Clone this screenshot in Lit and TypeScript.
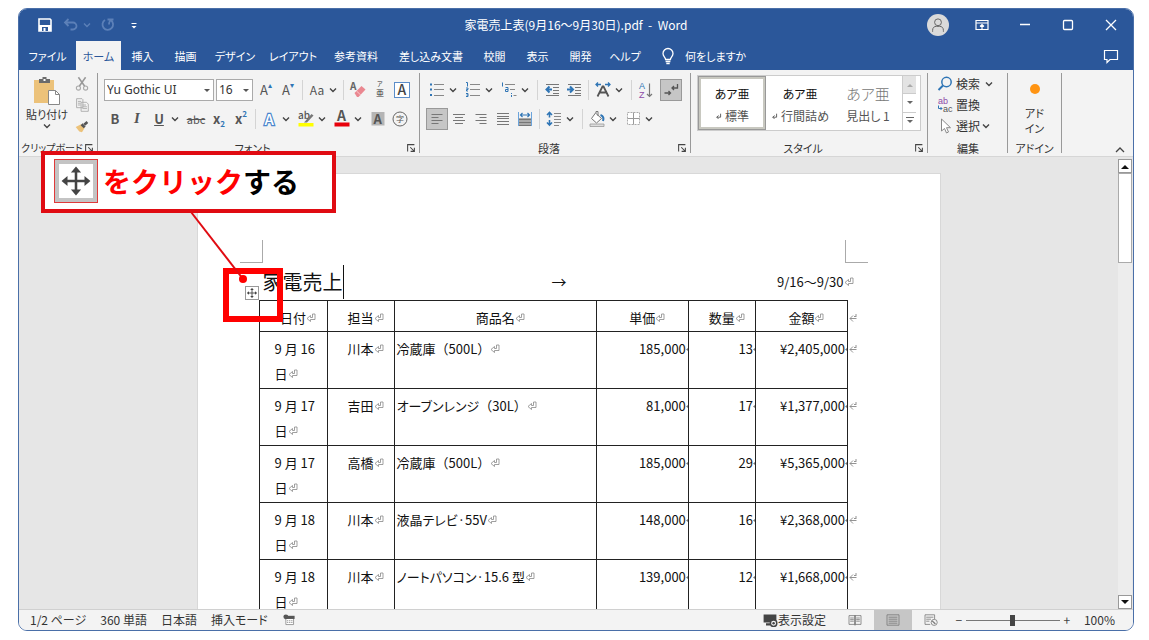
import { LitElement, html, css, svg, nothing } from "lit";
import { customElement } from "lit/decorators.js";
import { classMap } from "lit/directives/class-map.js";

const BLUE = "#2f75b5";

const glyphs: Record<string, unknown> = {
  save: svg`<path d="M4 4h11l1 1v11H4z" fill="none" stroke="#fff" stroke-width="1.6"/><path d="M4 10h12v6H4z" fill="#fff"/><path d="M7 12h6v4H7z" fill="#2b579a"/><path d="M8.500 13h2v3h-2z" fill="#fff"/>`,
  undo: svg`<path d="M7.500 4L4 7.500L7.500 11M4.500 7.500H12a3.500 3.500 0 0 1 0 7H9.500" fill="none" stroke="#5c80b8" stroke-width="1.800"/>`,
  redo: svg`<path d="M7 5a5.300 5.300 0 1 0 6 .3M9.500 4.500h6M14.500 4.500c-2 .5-3.500 2-3.500 5" fill="none" stroke="#5c80b8" stroke-width="1.800"/>`,
  customize: svg`<path d="M7.500 8.500h5" stroke="#fff" stroke-width="1.200"/><path d="M7.500 11h5L10 13.500z" fill="#fff"/>`,
  bulb: svg`<path d="M7.600 13.500c0-2-2.600-3-2.600-6a5 5 0 0 1 10 0c0 3-2.600 4-2.600 6zM7.600 15.500h4.800M8.300 17.500h3.400" fill="none" stroke="#fff" stroke-width="1.300"/>`,
  ribbonMode: svg`<path d="M4 5.500h12v9H4zM4 8h12M10 14V10M8 11.500l2-2 2 2" fill="none" stroke="#fff" stroke-width="1.200"/>`,
  minimize: svg`<path d="M5 9.500h10" stroke="#fff" stroke-width="1.300"/>`,
  maximize: svg`<rect x="5.500" y="5.500" width="9" height="9" rx="1" fill="none" stroke="#fff" stroke-width="1.300"/>`,
  close: svg`<path d="M5 5l10 10M15 5L5 15" stroke="#fff" stroke-width="1.300"/>`,
  comment: svg`<path d="M3.500 4.500h13v9H9l-3 3v-3H3.500z" fill="none" stroke="#fff" stroke-width="1.200"/>`,
  user: svg`<circle cx="10" cy="7" r="3.800" fill="none" stroke="#666" stroke-width="1.100"/><path d="M4 17.500v-1.500a4.500 4.500 0 0 1 4.500-4.500h3a4.500 4.500 0 0 1 4.500 4.500v1.500" fill="none" stroke="#666" stroke-width="1.100"/>`,
  cut: svg`<path d="M6 2.500l7 10M14 2.500L7 12.500" stroke="#999" stroke-width="1.700"/><circle cx="6" cy="14.500" r="2.300" fill="none" stroke="#aaa" stroke-width="1.200"/><circle cx="14" cy="14.500" r="2.300" fill="none" stroke="#aaa" stroke-width="1.200"/>`,
  copy: svg`<path d="M4 3h6l1 1v9H4zM9 7h6l2 2v8H9z" fill="#f3f3f3" stroke="#aaa"/><path d="M5.500 6h3.500M5.500 8h3M5.500 10h3M10.500 10h4M10.500 12h5M10.500 14h5" stroke="#aaa"/>`,
  brush: svg`<path d="M3 11l6-3 4 4-3 5-3-1z" fill="#ecc27a"/><path d="M9.500 8l3.500 3.500" stroke="#555" stroke-width="3"/><path d="M12.500 8.500L16 5.500" stroke="#555" stroke-width="3"/>`,
  paste: svg`<path d="M2 4h20v23H2z" fill="#ecc27a"/><path d="M7 3h3.500V1h4v2H18v4H7z" fill="#6b6b6b"/><path d="M11.500 3h2v2h-2z" fill="#fff"/><path d="M16.500 14.500h7l4 4v10h-11z" fill="#fff" stroke="#888"/><path d="M23.500 14.500v4h4" fill="none" stroke="#888"/>`,
  eraser: svg`<text x="2" y="10" font-size="10" font-weight="700" fill="#666">A</text><path d="M6.500 13l7-7 4 3.500-7 7.500h-1.500z" fill="#ea8790"/><path d="M8.500 11l4.500 4.300" stroke="#f8c9cd" stroke-width="1"/>`,
  ruby: svg`<text x="7" y="6" font-size="6" fill="#333">ア</text><text x="6" y="16" font-size="8" fill="#333">亜</text>`,
  boxedA: svg`<rect x="2.500" y="2.500" width="15" height="15" fill="#fff" stroke="#5b8dc9"/><text x="5.500" y="15" font-size="14" font-weight="500" fill="#444">A</text>`,
  circled: svg`<circle cx="10" cy="10" r="7" fill="none" stroke="#666"/><text x="6" y="13.300" font-size="8" fill="#555">字</text>`,
  effectA: svg`<text x="4.500" y="15.500" font-size="15" font-weight="500" fill="#fff" stroke="#4a86cc" stroke-width="2.400" paint-order="stroke">A</text>`,
  highlight: svg`<text x="2" y="10" font-size="10" font-weight="500" fill="#555">ab</text><path d="M8 13.500l7.500-8.500 2 1.500-6.500 7z" fill="#777"/><path d="M2.500 14h15v3.500h-15z" fill="#ff0"/>`,
  fontColor: svg`<text x="5" y="12" font-size="14" font-weight="700" fill="#555">A</text><path d="M2.500 13.500h15v4h-15z" fill="#e8000b"/>`,
  shadedA: svg`<path d="M3.500 3h13v13.500h-13z" fill="#b5b5b5"/><text x="5.500" y="14.500" font-size="13" font-weight="700" fill="#555">A</text>`,
  bullets: svg`<path d="M3 3.500h2v2H3zM3 8.500h2v2H3zM3 14h2v2H3z" fill="${BLUE}"/><path d="M7 4.500h10M7 9.500h10M7 15.500h10" stroke="#888"/>`,
  numbers: svg`<path d="M3 2.500h1.500v4M3 8h2v1.500H3.500V11H5M3 13.500h2v3H3M3.500 15H5" fill="none" stroke="${BLUE}" stroke-width="1"/><path d="M7 4.500h10M7 9.500h10M7 15.500h10" stroke="#888"/>`,
  levels: svg`<path d="M3.500 2.500v4M6.500 7.500H9v4H6.500v-2H9M12.500 13v1M12.500 15v2" fill="none" stroke="${BLUE}"/><path d="M6 4.500h10M11 9.500h5M14.500 15.500h3" stroke="#888"/>`,
  outdent: svg`<path d="M4 4.500h13M11 7.500h6M11 10.500h6M11 13.500h6M4 15.500h13" stroke="#777"/><path d="M10 9.500H5M7.500 6.500l-3 3 3 3" fill="none" stroke="${BLUE}" stroke-width="2"/>`,
  indent: svg`<path d="M4 4.500h13M11 7.500h6M11 10.500h6M11 13.500h6M4 15.500h13" stroke="#777"/><path d="M3 9.500h5M6 6.500l3 3-3 3" fill="none" stroke="${BLUE}" stroke-width="2"/>`,
  scaleText: svg`<path d="M3 4.500h5M5 2.500l-2 2 2 2M12 4.500h5M15 2.500l2 2-2 2" fill="none" stroke="${BLUE}" stroke-width="1.300"/><path d="M4.500 16.500L9.500 6.500h1l5 10M6.500 12.500h7" fill="none" stroke="#555" stroke-width="1.800"/>`,
  sort: svg`<text class="latin" x="3" y="9" font-size="9" fill="${BLUE}">A</text><text class="latin" x="3" y="17.500" font-size="9" fill="#8e4ba8">Z</text><path d="M13.500 3.500v13M11 14l2.500 2.500L16 14" fill="none" stroke="#777" stroke-width="1.200"/>`,
  marks: svg`<path d="M16.500 4v4H11M13 6l-2 2 2 2" fill="none" stroke="#555" stroke-width="1.300"/><path d="M3.500 13h6M7.500 11l2 2-2 2" fill="none" stroke="#555" stroke-width="1.300"/>`,
  left: svg`<path d="M4.500 5.500h11M4.500 8.500h7M4.500 11.500h11M4.500 14.500h7" stroke="#777"/>`,
  center: svg`<path d="M4 5.500h12M6 8.500h8M4 11.500h12M6 14.500h8" stroke="#777"/>`,
  right: svg`<path d="M4.500 5.500h11M8.500 8.500h7M4.500 11.500h11M8.500 14.500h7" stroke="#777"/>`,
  justify: svg`<path d="M4 4.500h12M4 7.500h12M4 9.500h12M4 12.500h12M4 15.500h12" stroke="#777"/>`,
  distribute: svg`<path d="M4 9h12v8H4z" fill="#aaa"/><path d="M4 10.500h12M4 13.500h12M4 16.500h12" stroke="#777"/><path d="M3.500 3v14M16.500 3v14" stroke="#6ba4dc"/><path d="M6 6h8M7.500 4L5.500 6l2 2M12.500 4l2 2-2 2" fill="none" stroke="${BLUE}" stroke-width="1.200"/>`,
  spacing: svg`<path d="M5.500 3.500v5M3 6l2.500-2.500L8 6M5.500 11v5M3 13.500L5.500 16 8 13.500" fill="none" stroke="${BLUE}" stroke-width="1.600"/><path d="M10 4.500h7M10 7.500h7M10 10.500h7M10 13.500h7M10 16.500h5" stroke="#888"/>`,
  bucket: svg`<path d="M8.500 4l6 5.500-5 4.500-5-4.500zM9 4V2.500h2V7" fill="#fff" stroke="#777"/><path d="M13.500 6c3 1 3.500 3 2.500 6" fill="none" stroke="${BLUE}" stroke-width="2"/><path d="M3 15h14v2.500H3z" fill="#ddd" stroke="#999" stroke-width=".8"/>`,
  borders: svg`<path d="M4.500 3.500h12v12h-12z" fill="#fff" stroke="#aaa" stroke-dasharray="2 1"/><path d="M10.500 3.500v12M4.500 9.500h12" stroke="#999"/>`,
  search: svg`<circle cx="11.500" cy="8" r="4.700" fill="none" stroke="${BLUE}" stroke-width="1.500"/><path d="M8 11.500L3.500 16" stroke="${BLUE}" stroke-width="2"/>`,
  replace: svg`<text class="latin" x="3" y="8.500" font-size="9" fill="#8e4ba8">ab</text><text class="latin" x="8" y="17" font-size="9" fill="#555">ac</text><path d="M3.500 10.500v3H7M5.500 12l1.500 1.500L5.500 15" fill="none" stroke="${BLUE}"/>`,
  pointer: svg`<path d="M6.500 3v12l3-2.500 2 4.500 2-1-2-4.300h4z" fill="#fff" stroke="#888"/>`,
  launcher: svg`<path d="M3.500 12.500v-9h9M7 7l5.500 5.500M12.500 7.500v5h-5" fill="none" stroke="#444" stroke-width="1.400"/>`,
  macro: svg`<path d="M5.500 5.500h11v11h-11z" fill="#fff" stroke="#777"/><path d="M5 4h13v4.500H5z" fill="#555"/><circle cx="5.500" cy="5.500" r="3.500" fill="#555"/><path d="M7 11h8M7 13.500h8" stroke="#777" stroke-dasharray="2 1"/>`,
  display: svg`<path d="M2 3h16v10H2zM5 14h5v3H5z" fill="#444"/><circle cx="14.500" cy="14" r="4" fill="#f3f3f3" stroke="#444" stroke-width="1.800"/><circle cx="14.500" cy="14" r="1.500" fill="#444"/>`,
  reader: svg`<path d="M2.500 4.500H10v11H2.500zM10 4.500h7.500v11H10zM10 4v13M4 7.500h4.500M4 9.500h4.500M4 11.500h4.500M11.500 7.500H16M11.500 9.500H16M11.500 11.500H16" fill="none" stroke="#777"/>`,
  print: svg`<path d="M2.500 3.500h15v13h-15zM4.500 6.500h11M4.500 9h11M4.500 11.500h11M4.500 14h11" fill="none" stroke="#777"/>`,
  web: svg`<path d="M9 15.500H2.500v-12h12V9M4 6.500h9M4 9h6M4 11.500h4" fill="none" stroke="#777"/><circle cx="14" cy="13" r="3.800" fill="#f3f3f3" stroke="#777"/><path d="M11.500 11l4 4" stroke="#777" stroke-width="1.500"/>`,
  move: svg`<path d="M10 3v14M3 10h14" stroke="#444" stroke-width="1.500"/><path d="M10 1.500l3 3.500H7zM10 18.500l3-3.500H7zM1.500 10L5 7v6zM18.500 10L15 7v6z" fill="#444"/>`,
};

const icon = (name: string, size = 20, box = 20) =>
  html`<svg width=${size} height=${size} viewBox="0 0 ${box} ${box}" aria-hidden="true">${glyphs[name]}</svg>`;
const chevron = (color = "#444") =>
  html`<svg width="10" height="8" viewBox="0 0 10 8" aria-hidden="true"><path d="M2 2.500L5 5.500l3-3" fill="none" stroke=${color} stroke-width="1.400" /></svg>`;
const mark = () =>
  html`<span class="mark"><svg width="10" height="10" viewBox="0 0 10 10" aria-hidden="true"><path d="M6.500 1h2.500V6.500H4.500V8.500L1 5.500 4.500 2.500v2h2z" fill="#fff" stroke="#888" stroke-width=".8" /></svg></span>`;
const endMark = () =>
  html`<span class="mark"><svg width="10" height="10" viewBox="0 0 10 10" aria-hidden="true"><path d="M8 1v2M8.500 5.500H2M5 2.500l-3 3 3 3M6 3.500h2.500" fill="none" stroke="#888" stroke-width=".9" /></svg></span>`;
const cellDot = () =>
  html`<span class="mark"><svg width="3" height="10" viewBox="0 0 3 10" aria-hidden="true"><path d="M0 5.500l2-1.500v3z" fill="#777" /></svg></span>`;

const common = css`
  :host { display: block; font-family: "Noto Sans CJK JP", "Noto Sans", sans-serif; font-size: 12px; color: #333; }
  * { box-sizing: border-box; }
  button, select, input { font: inherit; color: inherit; margin: 0; padding: 0; border: 0; background: none; }
  button { display: inline-flex; align-items: center; justify-content: center; white-space: nowrap; }
  svg { display: block; flex: none; overflow: visible; }
  svg text { font-family: "Noto Sans CJK JP", sans-serif; }
  svg .latin { font-family: "Liberation Sans", sans-serif; }
`;

@customElement("word-ribbon")
export class WordRibbon extends LitElement {
  static styles = [common, css`
    :host { background: #f3f3f3; border-bottom: 1px solid #d6d6d6; font-feature-settings: "palt"; }
    .ribbon { display: flex; padding-top: 3px; }
    .group { display: flex; flex-direction: column; flex: none; height: 83px; padding: 0 6px; }
    .font { width: 321px; }
    .paragraph { width: 270px; }
    .styles { width: 236px; }
    .rule { width: 1px; height: 80px; background: #999; flex: none; }
    .body { height: 67px; padding-top: 2px; }
    .caption { display: flex; align-items: center; height: 16px; font-size: 11px; line-height: 16px; margin: 0 -4px; }
    .caption span { flex: 1; text-align: center; white-space: nowrap; }
    .caption button { width: 12px; height: 14px; }
    .row { display: flex; align-items: center; height: 29px; }
    .tool { width: 22px; height: 22px; flex: none; }
    .split { width: 36px; height: 22px; flex: none; justify-content: flex-start; }
    .split > span { width: 22px; text-align: center; }
    .split > svg:first-child { margin: 0 1px; }
    .wide { width: 34px; }
    .on { background: #c6c6c6; border: 1px solid #999; }
    .apart { margin-left: 3px; }
    .sep { width: 1px; height: 20px; margin: 0 3px; background: #d4d4d4; flex: none; }
    .combo { position: relative; display: flex; border: 1px solid #aaa; background: #fff; height: 22px; font-family: "Noto Sans", sans-serif; }
    .combo select { appearance: none; width: 100%; padding-left: 2px; }
    .combo::after { content: ""; position: absolute; right: 3px; top: 9px; border: 3px solid transparent; border-top-color: #555; pointer-events: none; }
    .face { width: 110px; }
    .size { width: 37px; margin: 0 2px; }
    .letter { font-size: 13px; font-weight: 700; color: #555; }
    .case { color: #555; }
    .italic { font-family: "Liberation Serif", serif; font-style: italic; font-size: 15px; }
    .under { text-decoration: underline; }
    .strike { font-size: 11px; font-weight: 400; text-decoration: line-through; width: 24px; }
    .script { font-size: 8px; line-height: 12px; color: #2f75b5; }
    .sub { align-self: flex-end; } .sup { align-self: flex-start; }
    .grow { font-size: 13px; color: #555; }
    .clip { padding: 0 4px; width: 78px; }
    .clip .body { display: flex; padding-top: 0; }
    .clip .caption { margin: 0 -2px; font-size: 10px; }
    .paste { flex-direction: column; width: 48px; justify-content: flex-start; font-size: 11px; line-height: 16px; padding-top: 3px; }
    .minor { display: flex; flex-direction: column; padding-top: 0; }
    .minor button { width: 22px; height: 21px; }
    .gallery { display: flex; height: 56px; border: 1px solid #ccc; background: #fff; }
    .style { flex-direction: column; width: 68px; line-height: 18px; color: #555; }
    .style b { font-weight: 400; font-size: 13px; line-height: 26px; color: #111; }
    .style.chosen b, .style b { font-size: 12px; }
    .style.heading b { color: #777; font-weight: 300; font-size: 15px; }
    .chosen { border: 3px solid #c8c8c0; outline: 1px solid #999; outline-offset: -1px; }
    .style span { display: flex; align-items: center; gap: 3px; font-size: 12px; }
    .scroller { display: flex; flex-direction: column; border-left: 1px solid #ccc; width: 14px; }
    .scroller button { flex: 1; border-bottom: 1px solid #ccc; }
    .scroller button:first-child { background: #e3e3e3; }
    .scroller button:last-child { border-bottom: 0; }
    .edit { width: 79px; padding-left: 7px; }
    .edit .body { padding-top: 0; display: flex; flex-direction: column; align-items: flex-start; }
    .edit .body button { height: 21px; gap: 1px; }
    .addin { width: 53px; }
    .addin .body button { flex-direction: column; font-size: 11px; line-height: 15px; width: 100%; gap: 12px; padding-top: 9px; }
    .dot { width: 10px; height: 10px; border-radius: 5px; background: #ff9412; }
    .collapse { margin-left: auto; align-self: flex-end; padding: 2px 8px; }
    .style.plain b { font-size: 14px; }
  `];

  private tool(name: string, label: string, extra = "") {
    return html`<button class="tool ${extra}" aria-label=${label}>${icon(name)}</button>`;
  }
  private split(name: string, label: string) {
    return html`<button class="split" aria-label=${label}>${icon(name)}${chevron()}</button>`;
  }
  private caption(text: string, launcher = true) {
    return html`<div class="caption"><span>${text}</span>${launcher ? html`<button aria-label=${text + "の詳細"}>${icon("launcher", 12, 16)}</button>` : nothing}</div>`;
  }

  render() {
    const sep = html`<span class="sep"></span>`;
    const rule = html`<span class="rule"></span>`;
    const ret = html`<svg width="7" height="7" viewBox="0 0 10 10"><path d="M8 1v5H2.500M5 3.500L2.500 6 5 8.500" fill="none" stroke="#555" stroke-width="1.300" /></svg>`;
    return html`<div class="ribbon">
      <div class="group clip">
        <div class="body">
          <button class="paste">${icon("paste", 30, 30)}<span>貼り付け</span>${chevron()}</button>
          <div class="minor">
            <button aria-label="切り取り">${icon("cut", 18)}</button>
            <button aria-label="コピー">${icon("copy", 18)}</button>
            <button aria-label="書式のコピー">${icon("brush", 18)}</button>
          </div>
        </div>
        ${this.caption("クリップボード")}
      </div>
      ${rule}
      <div class="group font">
        <div class="body">
          <div class="row">
            <label class="combo face"><select aria-label="フォント"><option>Yu Gothic UI</option></select></label>
            <label class="combo size"><select aria-label="フォント サイズ"><option>16</option></select></label>
            <button class="tool grow" aria-label="拡大">A<span class="script sup">▴</span></button>
            <button class="tool grow" aria-label="縮小">A<span class="script sup">▾</span></button>
            ${sep}<button class="split wide case" aria-label="文字種の変換"><span>Aa</span>${chevron()}</button>${sep}
            ${this.tool("eraser", "書式のクリア")}${this.tool("ruby", "ルビ")}${this.tool("boxedA", "囲み線")}
          </div>
          <div class="row">
            <button class="tool letter">B</button>
            <button class="tool letter italic">I</button>
            <button class="split letter"><span class="under">U</span>${chevron()}</button>
            <button class="tool letter strike">abc</button>
            <button class="tool letter">x<span class="script sub">2</span></button>
            <button class="tool letter">x<span class="script sup">2</span></button>
            ${sep}${this.split("effectA", "文字の効果")}${this.split("highlight", "蛍光ペン")}${this.split("fontColor", "フォントの色")}
            ${this.tool("shadedA", "網かけ")}${this.tool("circled", "囲い文字")}
          </div>
        </div>
        ${this.caption("フォント")}
      </div>
      ${rule}
      <div class="group paragraph">
        <div class="body">
          <div class="row">
            ${this.split("bullets", "箇条書き")}${this.split("numbers", "段落番号")}${this.split("levels", "アウトライン")}${sep}
            ${this.tool("outdent", "インデントを減らす")}${this.tool("indent", "インデントを増やす")}${sep}
            ${this.split("scaleText", "拡張書式")}${sep}${this.tool("sort", "並べ替え")}${this.tool("marks", "編集記号", "on apart")}
          </div>
          <div class="row">
            ${this.tool("left", "左揃え", "on")}${this.tool("center", "中央揃え")}${this.tool("right", "右揃え")}${this.tool("justify", "両端揃え")}${this.tool("distribute", "均等割り付け")}
            ${sep}${this.split("spacing", "行間")}${sep}${this.split("bucket", "塗りつぶし")}${this.split("borders", "罫線")}
          </div>
        </div>
        ${this.caption("段落")}
      </div>
      ${rule}
      <div class="group styles">
        <div class="body">
          <div class="gallery">
            <button class="style chosen"><b>あア亜</b><span>${ret}標準</span></button>
            <button class="style"><b>あア亜</b><span>${ret}行間詰め</span></button>
            <button class="style heading"><b>あア亜</b><span>見出し 1</span></button>
            <div class="scroller">
              <button aria-label="上へ"><svg width="6" height="4"><path d="M0 4l3-3 3 3z" fill="#aaa" /></svg></button>
              <button aria-label="下へ"><svg width="6" height="4"><path d="M0 0l3 3 3-3z" fill="#666" /></svg></button>
              <button aria-label="その他"><svg width="8" height="8"><path d="M0 .5h8" stroke="#666" /><path d="M1 3l3 3 3-3z" fill="#666" /></svg></button>
            </div>
          </div>
        </div>
        ${this.caption("スタイル")}
      </div>
      ${rule}
      <div class="group edit">
        <div class="body">
          <button>${icon("search")}検索&nbsp; ${chevron()}</button>
          <button>${icon("replace")}置換</button>
          <button>${icon("pointer")}選択${chevron()}</button>
        </div>
        ${this.caption("編集", false)}
      </div>
      ${rule}
      <div class="group addin">
        <div class="body"><button><span class="dot"></span><span>アド<br />イン</span></button></div>
        ${this.caption("アドイン", false)}
      </div>
      ${rule}
      <button class="collapse" aria-label="リボンを折りたたむ"><svg width="10" height="8" viewBox="0 0 10 8"><path d="M1 6l4-4 4 4" fill="none" stroke="#444" stroke-width="1.300" /></svg></button>
    </div>`;
  }
}

interface Sale { day: string; staff: string; item: string; price: string; count: string; total: string; }

const sales: Sale[] = [
  { day: "16", staff: "川本", item: "冷蔵庫（500L）", price: "185,000", count: "13", total: "¥2,405,000" },
  { day: "17", staff: "吉田", item: "オーブンレンジ（30L）", price: "81,000", count: "17", total: "¥1,377,000" },
  { day: "17", staff: "高橋", item: "冷蔵庫（500L）", price: "185,000", count: "29", total: "¥5,365,000" },
  { day: "18", staff: "川本", item: "液晶テレビ·55V", price: "148,000", count: "16", total: "¥2,368,000" },
  { day: "18", staff: "川本", item: "ノートパソコン·15.6 型", price: "139,000", count: "12", total: "¥1,668,000" },
];

// Katakana runs are set proportionally, everything else keeps full-width metrics.
const kana = (text: string) =>
  text.split(/([ァ-ー]+)/).map((part) => (/^[ァ-ー]/.test(part) ? html`<span class="kana">${part}</span>` : part));

@customElement("word-document")
export class WordDocument extends LitElement {
  static styles = [common, css`
    :host { flex: 1; min-height: 0; display: flex; background: #e6e6e6; overflow: hidden; }
    .canvas { flex: 1; display: flex; justify-content: center; align-items: flex-start; padding-top: 16px; overflow: hidden; }
    .page { width: 744px; background: #fff; border: 1px solid #d8d8d8; color: #111; padding: 66px 72px 60px 61px; font-size: 13px; }
    .corners { display: flex; justify-content: space-between; margin: 0 0 0 -19px; }
    .corner { width: 23px; height: 23px; border: 0 solid #aaa; border-width: 0 1px 1px 0; }
    .corner:last-child { border-width: 0 0 1px 1px; }
    .lead { display: grid; grid-template-columns: 1fr auto 1fr; align-items: center; height: 37px; padding: 0 24px 0 4px; }
    .lead > span:last-child { justify-self: end; }
    h1 { margin: 0; font-size: 20px; font-weight: 400; line-height: 34px; border-right: 1px solid #111; justify-self: start; }
    .tab { font-size: 15px; padding-left: 12px; }
    .sheet { position: relative; }
    .handle { position: absolute; left: -14px; top: -14px; width: 14px; height: 14px; border: 1px solid #999; background: #fff; }
    table { border-collapse: collapse; table-layout: fixed; width: 601px; line-height: 25px; }
    .date { width: 68px; } .name { width: 67px; } .item { width: 202px; } .price { width: 92px; } .end { width: 12px; }
    th, td { border: 1px solid #222; padding: 0 2px; font-weight: 400; vertical-align: top; text-align: left; white-space: nowrap; }
    thead th, thead td { height: 31px; padding-top: 4px; text-align: center; }
    tbody td { height: 57px; padding-top: 4px; }
    tbody .day { padding-left: 15px; }
    .mid, tbody .mid { text-align: center; }
    .num { text-align: right; }
    .kana { font-feature-settings: "palt"; }
    thead .out, tbody .out { border: 0; border-left: 1px solid #222; padding-left: 0; text-align: left; }
    .mark { display: inline-block; width: 0; height: 10px; }
    .bar { width: 14px; margin: 2px 1px 0 0; display: flex; flex-direction: column; background: #ededed; }
    .bar button { height: 14px; background: #fff; border: 1px solid #999; flex: none; }
    .thumb { height: 90px; background: #fff; border: 1px solid #aaa; margin-bottom: auto; }
  `];

  render() {
    return html`
      <div class="canvas"><article class="page">
        <div class="corners"><span class="corner"></span><span class="corner"></span></div>
        <div class="lead"><h1>家電売上</h1><span class="tab">→</span><span>9/16～9/30${mark()}</span></div>
        <div class="sheet">
          <button class="handle" aria-label="表全体の選択">${icon("move", 12)}</button>
          <table>
            <colgroup><col class="date" /><col class="name" /><col class="item" /><col class="price" /><col class="name" /><col class="price" /><col class="end" /></colgroup>
            <thead><tr>${["日付", "担当", "商品名", "単価", "数量", "金額"].map((h) => html`<th>${h}${mark()}</th>`)}<td class="out">${endMark()}</td></tr></thead>
            <tbody>${sales.map((s) => html`<tr>
              <td class="day">9 月 ${s.day}<br />日${mark()}</td>
              <td class="mid">${s.staff}${mark()}</td>
              <td>${kana(s.item)}${mark()}</td>
              ${[s.price, s.count, s.total].map((n) => html`<td class="num">${n}${cellDot()}</td>`)}
              <td class="out">${endMark()}</td></tr>`)}</tbody>
          </table>
        </div>
      </article></div>
      <div class="bar">
        <button aria-label="上へスクロール"><svg width="8" height="5"><path d="M0 5l4-4 4 4z" fill="#111" /></svg></button>
        <div class="thumb"></div>
        <button aria-label="下へスクロール"><svg width="8" height="5"><path d="M0 0l4 4 4-4z" fill="#111" /></svg></button>
      </div>`;
  }
}

@customElement("word-status")
export class WordStatus extends LitElement {
  static styles = [common, css`
    :host { background: #f3f3f3; border-top: 1px solid #d0d0d0; font-feature-settings: "palt"; }
    .status { display: flex; align-items: center; height: 20px; line-height: 20px; padding: 0 18px 0 11px; white-space: nowrap; }
    .facts { display: flex; gap: 14px; align-items: center; flex: 1; }
    .settings { margin-right: 10px; }
    .view { width: 38px; height: 20px; }
    .current { background: #c6c6c6; }
    .zoom { width: 14px; color: #444; }
    .less { margin-left: 2px; }
    .percent { margin-left: 10px; }
    input { appearance: none; width: 94px; height: 14px; background: linear-gradient(#777, #777) center / 100% 1px no-repeat; }
    input::-webkit-slider-thumb { appearance: none; width: 5px; height: 11px; background: #444; }
  `];
  render() {
    return html`<footer class="status">
      <div class="facts"><span>1/2 ページ</span><span>360 単語</span><span>日本語</span><span>挿入モード</span>${icon("macro", 14)}</div>
      <button class="settings">${icon("display", 16)}表示設定</button>
      <button class="view" aria-label="閲覧モード">${icon("reader", 16)}</button>
      ${["print", "web"].map((v) => html`<button class=${classMap({ view: true, current: v === "print" })} aria-label=${v === "print" ? "印刷レイアウト" : "Web レイアウト"}>${icon(v, 16)}</button>`)}
      <button class="zoom less">−</button><input type="range" min="0" max="100" value="50" aria-label="ズーム" /><button class="zoom">+</button>
      <span class="percent">100%</span>
    </footer>`;
  }
}

const tabs = ["ファイル", "ホーム", "挿入", "描画", "デザイン", "レイアウト", "参考資料", "差し込み文書", "校閲", "表示", "開発", "ヘルプ"];

@customElement("app-root")
export class AppRoot extends LitElement {
  static styles = [common, css`
    :host { height: 100vh; padding: 8px 15px 9px 18px; background: #fff; box-sizing: border-box; }
    .window { position: relative; display: flex; flex-direction: column; height: 100%; }
    .frame { display: flex; flex-direction: column; flex: 1; min-height: 0; border: 1px solid #4a6fa8; border-radius: 9px; overflow: hidden; }
    .head { background: #2b579a; color: #fff; margin: -1px -1px 0; padding: 0 1px; }
    .title { display: grid; grid-template-columns: 1fr auto 1fr; align-items: center; height: 33px; }
    .quick { display: flex; align-items: center; padding-left: 16px; gap: 6px; }
    .quick button:nth-child(2) { gap: 1px; }
    .controls { display: flex; align-items: center; justify-content: flex-end; gap: 23px; padding-right: 12px; }
    .avatar { width: 22px; height: 22px; border-radius: 11px; background: #dadada; }
    .name { white-space: pre; }
    .tabs { display: grid; grid-template-columns: 57px 45px 43px 43px 56px 60px 66px 84px 43px 43px 43px 46px auto 1fr; height: 29px; font-size: 11px; font-feature-settings: "palt"; }
    .tab { display: flex; align-items: center; justify-content: center; color: #fff; text-decoration: none; white-space: nowrap; }
    .active { background: #f3f3f3; color: #2b579a; }
    .ask { gap: 7px; padding-left: 10px; }
    .comment { justify-self: end; padding-right: 12px; }
    .callout { position: absolute; left: 23px; top: 143px; width: 295px; height: 62px; border: 4px solid #e00b12; background: #fff; color: #000; display: flex; align-items: center; gap: 5px; padding: 0 9px 2px; font-size: 28px; font-weight: 700; white-space: nowrap; }
    .callout b { color: #f00; font-weight: 700; }
    .sample { display: grid; place-items: center; width: 44px; height: 44px; border: 1px solid #e03a3a; box-shadow: inset 0 0 0 4px #c4c4c4; }
    .pointer { position: absolute; left: 160px; top: 200px; }
    .focus { position: absolute; left: 205px; top: 260px; width: 60px; height: 54px; border: 6px solid #f00; }
  `];

  render() {
    return html`<div class="window">
      <div class="frame">
        <header class="head">
          <div class="title">
            <div class="quick">
              <button aria-label="上書き保存">${icon("save")}</button>
              <button aria-label="元に戻す">${icon("undo")}${chevron("#5c80b8")}</button>
              <button aria-label="やり直し">${icon("redo")}</button>
              <button aria-label="カスタマイズ">${icon("customize")}</button>
            </div>
            <span class="name">家電売上表(9月16～9月30日).pdf  -  Word</span>
            <div class="controls">
              <button class="avatar" aria-label="アカウント">${icon("user", 18)}</button>
              <button aria-label="リボンの表示オプション">${icon("ribbonMode")}</button>
              <button aria-label="最小化">${icon("minimize")}</button>
              <button aria-label="最大化">${icon("maximize")}</button>
              <button aria-label="閉じる">${icon("close")}</button>
            </div>
          </div>
          <nav class="tabs">
            ${tabs.map((t) => html`<a href="#" class=${classMap({ tab: true, active: t === "ホーム" })}>${t}</a>`)}
            <button class="ask">${icon("bulb")}何をしますか</button>
            <button class="comment" aria-label="コメント">${icon("comment")}</button>
          </nav>
        </header>
        <word-ribbon></word-ribbon>
        <word-document></word-document>
        <word-status></word-status>
      </div>
      <div class="focus"></div>
      <svg class="pointer" width="80" height="80" viewBox="0 0 80 80" aria-hidden="true"><path d="M13 4L65 71" stroke="#e00b12" stroke-width="2" /><circle cx="65" cy="71" r="4" fill="#f00" /></svg>
      <div class="callout"><span class="sample">${icon("move", 34)}</span><span><b>をクリック</b>する</span></div>
    </div>`;
  }
}
